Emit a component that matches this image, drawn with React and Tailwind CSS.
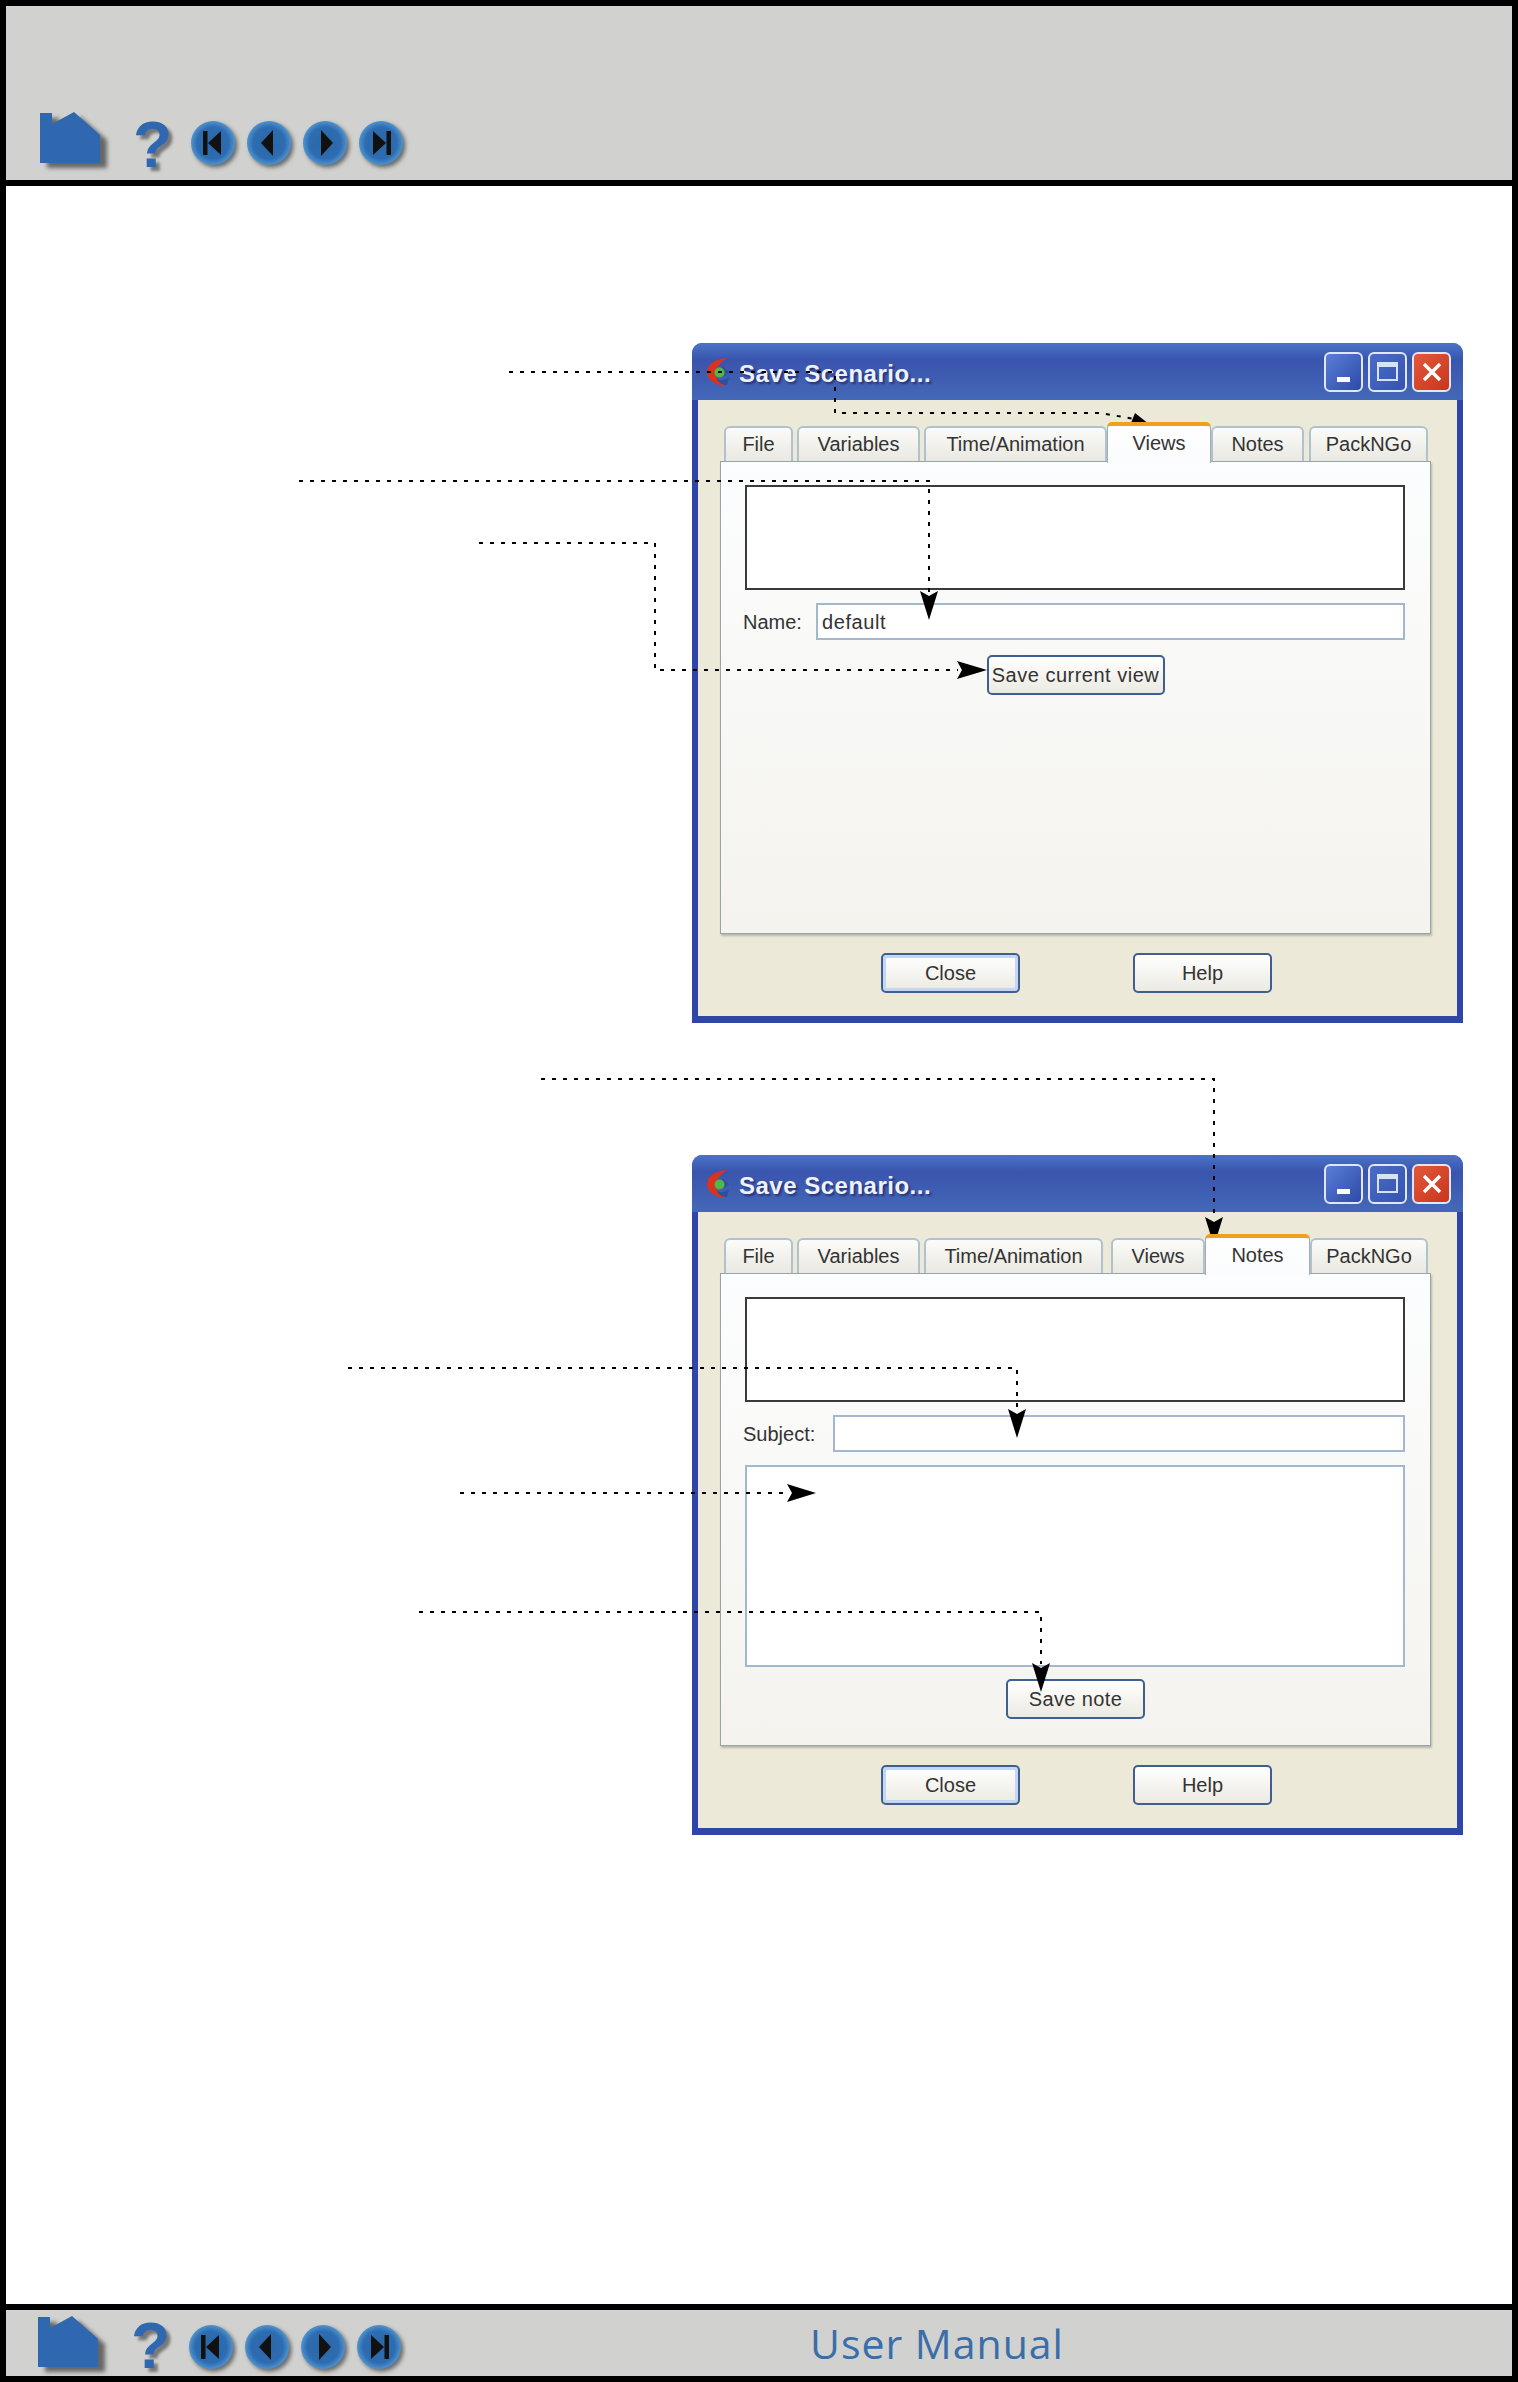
import React from "react";

const FONT = "font-['Liberation_Sans',Arial,sans-serif]";

function Home() {
  return (
    <svg width="72" height="54" viewBox="0 0 72 54" className="overflow-visible shrink-0">
      <defs>
        <filter id="hs" x="-20%" y="-20%" width="140%" height="140%"><feGaussianBlur stdDeviation="2" /></filter>
      </defs>
      <polygon points="0,1 12,1 12,12 34,0 60,23 60,51 0,51" fill="#666" transform="translate(7,5)" filter="url(#hs)" />
      <polygon points="0,1 12,1 12,12 34,0 60,23 60,51 0,51" fill="#2f68b0" />
    </svg>
  );
}

function Question() {
  return (
    <span className="font-['Liberation_Sans',Arial,sans-serif] font-bold text-[64px] leading-[60px] text-[#2f68b0] [text-shadow:4px_4px_3px_#777]">?</span>
  );
}

function Nav({ kind }) {
  const glyph = {
    first: <><rect x="12" y="10" width="4.5" height="24" fill="#111" /><polygon points="17,22 30,10 30,34" fill="#111" /></>,
    prev: <polygon points="14,22 26,9 26,35" fill="#111" />,
    next: <polygon points="30,22 18,9 18,35" fill="#111" />,
    last: <><rect x="27.5" y="10" width="4.5" height="24" fill="#111" /><polygon points="27,22 14,10 14,34" fill="#111" /></>,
  }[kind];
  return (
    <svg width="44" height="44" viewBox="0 0 44 44" className="overflow-visible">
      <defs>
        <radialGradient id={"b" + kind} cx="50%" cy="50%" r="50%">
          <stop offset="0%" stopColor="#2b68a8" />
          <stop offset="72%" stopColor="#2d6cb0" />
          <stop offset="100%" stopColor="#4f93cf" />
        </radialGradient>
        <filter id={"s" + kind} x="-30%" y="-30%" width="160%" height="160%"><feGaussianBlur stdDeviation="2" /></filter>
      </defs>
      <circle cx="24.5" cy="24.5" r="22" fill="#666" filter={`url(#s${kind})`} />
      <circle cx="22" cy="22" r="22" fill={`url(#b${kind})`} />
      {glyph}
    </svg>
  );
}

function Icons({ qClass }) {
  return (
    <div className="flex items-end">
      <Home />
      <div className={`w-[79px] pl-[21px] h-[54px] leading-[54px] ${qClass}`}><Question /></div>
      <div className="flex gap-[12px] mb-[1px]">
        <Nav kind="first" /><Nav kind="prev" /><Nav kind="next" /><Nav kind="last" />
      </div>
    </div>
  );
}

function Logo() {
  return (
    <svg width="24" height="30" viewBox="0 0 24 30" className="shrink-0">
      <path d="M21 1 C8 2 1 8 1 15 C1 22 8 28 19 29 C14 26 10 21 10 16 C10 10 15 5 21 1 Z" fill="#d8331f" />
      <path d="M10 21 C13 24 18 24 23 20 L21 28 C16 28 12 25 10 21 Z" fill="#2f4f9a" />
      <path d="M16 9 L23 15 L18 19 Z" fill="#2f4f9a" />
      <ellipse cx="13.5" cy="15.5" rx="5" ry="5" fill="#4fb848" />
    </svg>
  );
}

function Tab({ w, label, active }) {
  if (active) {
    return (
      <div className={`${w} h-[41px] -mb-px relative z-10 rounded-t-[5px] border-t-[4px] border-t-[#f0a020] border-x border-x-[#a3adb5] bg-linear-to-b from-[#fefefe] to-[#fbfcfe] flex items-start justify-center pt-[5px] text-[20px] leading-[24px] text-[#333]`}>
        {label}
      </div>
    );
  }
  return (
    <div className={`${w} h-[35px] mt-[4px] rounded-t-[6px] border-t-2 border-x-2 border-[#b0c2cd] bg-linear-to-b from-[#fbfbf9] to-[#e9e8e1] flex items-start justify-center pt-[4px] text-[20px] leading-[24px] text-[#333]`}>
      {label}
    </div>
  );
}

function WinBtn({ children, className }) {
  return <div className={`w-[39px] h-[40px] rounded-[6px] border-2 border-[#dfe6f6] flex items-center justify-center ${className}`}>{children}</div>;
}

function XButton({ w, label, primary, className = "" }) {
  return (
    <div className={`${w} h-[40px] rounded-[5px] border-2 border-[#3f5f90] flex items-center justify-center text-[20px] text-[#333] bg-linear-to-b from-[#ffffff] to-[#ebeae2] ${primary ? "shadow-[inset_0_0_0_3px_#c5d6f2]" : ""} ${className}`}>
      {label}
    </div>
  );
}

function Window({ tabs, children }) {
  return (
    <div className={`w-[771px] h-[680px] ml-[686px] flex flex-col rounded-t-[10px] bg-[#2f46a8] ${FONT}`}>
      <div className="h-[57px] shrink-0 rounded-t-[10px] bg-linear-to-b from-[#4a74c8] via-[#3a54ad] via-30% to-[#4468b8] flex items-center pl-[14px] pr-[12px]">
        <Logo />
        <span className="ml-[9px] mt-[5px] text-[24px] font-bold tracking-[0.5px] text-[#eef1fa] [text-shadow:2px_2px_2px_#27357a]">Save Scenario...</span>
        <div className="ml-auto flex gap-[5px]">
          <WinBtn className="bg-linear-to-br from-[#5a7fd6] to-[#2e49a8] items-end pb-[8px]">
            <div className="w-[13px] h-[5px] bg-white" />
          </WinBtn>
          <WinBtn className="bg-linear-to-br from-[#4a6cc8] to-[#3653b0]">
            <div className="w-[21px] h-[19px] border-2 border-t-[5px] border-[#d8e2f6]" />
          </WinBtn>
          <WinBtn className="bg-linear-to-br from-[#e2583a] to-[#c9351c]">
            <svg width="22" height="22" viewBox="0 0 22 22"><path d="M3 3 L19 19 M19 3 L3 19" stroke="#fff" strokeWidth="3.4" /></svg>
          </WinBtn>
        </div>
      </div>
      <div className="mx-[6px] mb-[7px] flex-1 bg-[#ece9d8] flex flex-col pl-[22px] pr-[26px]">
        <div className="flex pl-[4px] pt-[22px] h-[61px] shrink-0 relative z-10">{tabs}</div>
        <div className="h-[473px] shrink-0 border border-[#98a5a8] shadow-[1px_2px_2px_#b8b8a8] bg-linear-to-b from-[#fcfdfe] to-[#f4f3ee] px-[24px] pt-[23px] text-[20px] text-[#333]">
          {children}
        </div>
        <div className="flex pl-[161px] pt-[19px] gap-[113px]">
          <XButton w="w-[139px]" label="Close" primary />
          <XButton w="w-[139px]" label="Help" />
        </div>
      </div>
    </div>
  );
}

const ViewBox = () => <div className="w-[660px] h-[105px] bg-white border-2 border-[#3a3a3a]" />;

function Dotted({ d }) {
  return <path d={d} fill="none" stroke="#000" strokeWidth="2" strokeDasharray="4 7" />;
}

function Overlay() {
  return (
    <svg className="absolute left-0 top-0 pointer-events-none" width="1518" height="2382" viewBox="0 0 1518 2382">
      <Dotted d="M509 372 H835 V413 H1100 L1135 419" />
      <polygon points="1135,413 1159,432 1129,428" fill="#000" />
      <Dotted d="M299 481 H929 V592" />
      <polygon points="920,591 929,596 938,591 929,620" fill="#000" />
      <Dotted d="M479 543 H655 V670 H958" />
      <polygon points="957,661 962,670 957,679 987,670" fill="#000" />
      <Dotted d="M541 1079 H1214 V1218" />
      <polygon points="1205,1217 1214,1222 1223,1217 1214,1246" fill="#000" />
      <Dotted d="M348 1368 H1017 V1410" />
      <polygon points="1008,1409 1017,1414 1026,1409 1017,1438" fill="#000" />
      <Dotted d="M460 1493 H787" />
      <polygon points="787,1484 792,1493 787,1502 816,1493" fill="#000" />
      <Dotted d="M419 1612 H1041 V1664" />
      <polygon points="1032,1663 1041,1668 1050,1663 1041,1692" fill="#000" />
    </svg>
  );
}

export default function App() {
  return (
    <div className="relative w-[1518px] h-[2382px] bg-black p-[6px] flex flex-col overflow-hidden">
      <header className="h-[174px] shrink-0 bg-[#d1d1cf] pl-[34px] flex items-end pb-[14px]">
        <Icons qClass="pt-[3px]" />
      </header>
      <main className="mt-[6px] h-[2118px] shrink-0 bg-white w-[1506px] pt-[157px]">
        <Window
          tabs={<>
            <Tab w="w-[69px] mr-[4px]" label="File" />
            <Tab w="w-[123px] mr-[4px]" label="Variables" />
            <Tab w="w-[183px]" label="Time/Animation" />
            <Tab w="w-[104px]" label="Views" active />
            <Tab w="w-[93px] mr-[5px]" label="Notes" />
            <Tab w="w-[119px]" label="PackNGo" />
          </>}
        >
          <ViewBox />
          <div className="flex items-center mt-[13px] -ml-[2px]">
            <span className="w-[73px]">Name:</span>
            <div className="w-[589px] h-[37px] bg-white border-2 border-[#a3b8cf] pl-[4px] flex items-center tracking-[0.6px]">default</div>
          </div>
          <div className="flex justify-center mt-[15px]">
            <XButton w="w-[178px] tracking-[0.5px]" label="Save current view" />
          </div>
        </Window>
        <div className="h-[132px]" />
        <Window
          tabs={<>
            <Tab w="w-[69px] mr-[4px]" label="File" />
            <Tab w="w-[123px] mr-[4px]" label="Variables" />
            <Tab w="w-[179px] mr-[8px]" label="Time/Animation" />
            <Tab w="w-[94px]" label="Views" />
            <Tab w="w-[105px]" label="Notes" active />
            <Tab w="w-[118px]" label="PackNGo" />
          </>}
        >
          <ViewBox />
          <div className="flex items-center mt-[13px] -ml-[2px]">
            <span className="w-[90px]">Subject:</span>
            <div className="w-[572px] h-[37px] bg-white border-2 border-[#a3b8cf]" />
          </div>
          <div className="mt-[13px] w-[660px] h-[202px] bg-white border-2 border-[#a3b8cf]" />
          <div className="flex justify-center mt-[12px]">
            <XButton w="w-[139px] tracking-[0.4px]" label="Save note" />
          </div>
        </Window>
      </main>
      <footer className="mt-[6px] h-[66px] shrink-0 bg-[#d1d1cf] pl-[32px] flex items-end pb-[6px] relative">
        <Icons qClass="" />
        <span className="absolute left-[804px] top-[9px] font-['Open_Sans',sans-serif] font-medium text-[41px] leading-[48px] tracking-[1px] text-[#3a6ea8]">User Manual</span>
      </footer>
      <Overlay />
    </div>
  );
}
